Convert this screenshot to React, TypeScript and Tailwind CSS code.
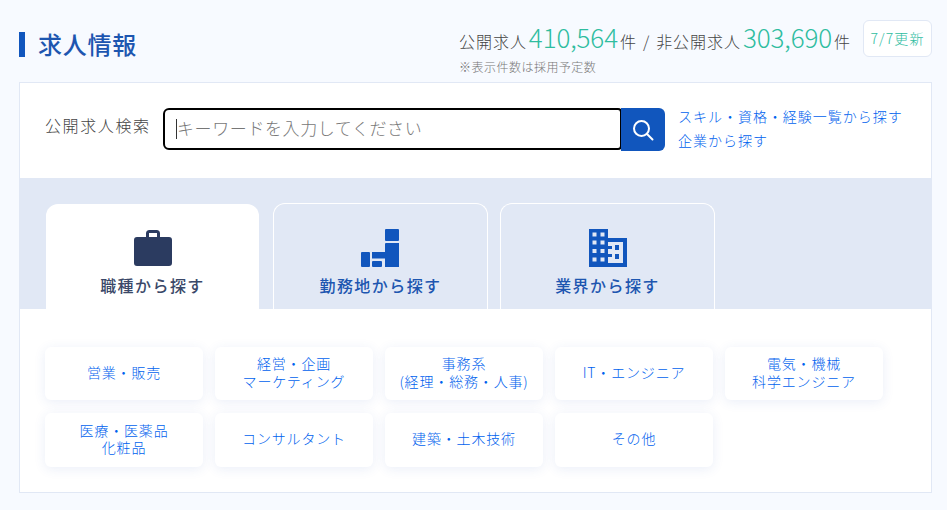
const font = "font-['Noto_Sans_CJK_JP','Noto_Sans',sans-serif]";

const cats: string[][] = [
  ["営業・販売"],
  ["経営・企画", "マーケティング"],
  ["事務系", "(経理・総務・人事)"],
  ["IT・エンジニア"],
  ["電気・機械", "科学エンジニア"],
  ["医療・医薬品", "化粧品"],
  ["コンサルタント"],
  ["建築・土木技術"],
  ["その他"],
];

function Bag() {
  return (
    <svg width="38" height="36" viewBox="0 0 38 36" className="block">
      <path
        fillRule="evenodd"
        fill="#2b3b60"
        d="M12 7V3.5A3.5 3.5 0 0 1 15.5 0h7A3.5 3.5 0 0 1 26 3.5V7h9a3 3 0 0 1 3 3v23a3 3 0 0 1-3 3H3a3 3 0 0 1-3-3V10a3 3 0 0 1 3-3zM15 3v4h8V3z"
      />
    </svg>
  );
}

function Blocks() {
  return (
    <svg width="38" height="38" viewBox="0 0 38 38" className="-ml-[2px] block" fill="#1156bd">
      <rect x="24" y="0" width="14" height="12" rx="1" />
      <path d="M25 14h13v24H24V29.5H11V23h13v-8a1 1 0 0 1 1-1z" />
      <rect x="0" y="23" width="9" height="15" rx="1" />
      <rect x="11" y="32" width="10" height="6" rx="1" />
    </svg>
  );
}

function Building() {
  const rows = [3.5, 11.5, 20, 28.5];
  return (
    <svg width="38" height="38" viewBox="0 0 38 38" className="block">
      <path fill="#1156bd" d="M0 0h19v9h19v29H0z" />
      <path fill="#e1e8f5" d="M19 13h15v21H19z" />
      <g fill="#e1e8f5">
        {rows.map((y) =>
          [3.5, 11.5].map((x) => <rect key={`${x}-${y}`} x={x} y={y} width="4" height="4" />),
        )}
      </g>
      <g fill="#1156bd">
        <rect x="19" y="17" width="4" height="3" />
        <rect x="19" y="25" width="4" height="3" />
        <rect x="26" y="16" width="4" height="5" />
        <rect x="26" y="25" width="4" height="5" />
      </g>
    </svg>
  );
}

export default function App() {
  return (
    <div className={`${font} min-h-[510px] w-[947px] overflow-hidden bg-[#f7faff] pt-5 pl-[19px] font-light`}>
      <div className="flex h-[62px] w-[913px] items-start justify-between">
        <h2 className="mt-[12px] flex h-[25px] items-center border-l-[6px] border-[#1156bd] pl-[13px] text-[24px] leading-none font-medium tracking-[0.03em] text-[#1d56b0]">
          <span className="-mt-[1px]">求人情報</span>
        </h2>
        <div className="flex items-start gap-3">
          <div>
            <p className="flex h-[36px] items-baseline pt-[4px] text-[16px] leading-none tracking-[0.06em] whitespace-nowrap text-[#444]">
              公開求人
              <span className="mx-[2px] text-[26px] leading-none tracking-[-0.005em] text-[#2fbd9f]">410,564</span>件
              <span className="mx-[6px]">/</span>非公開求人
              <span className="mx-[2px] text-[26px] leading-none tracking-[-0.005em] text-[#2fbd9f]">303,690</span>件
            </p>
            <p className="mt-[2px] text-[12px] leading-[18px] tracking-[0.04em] text-[#777]">※表示件数は採用予定数</p>
          </div>
          <div className="flex h-[37px] w-[69px] items-center justify-center rounded-md border border-[#e1e8f5] bg-white text-[14px] tracking-[0.08em] text-[#2fbd9f]">
            7/7更新
          </div>
        </div>
      </div>

      <div className="w-[913px] border border-[#e1e8f5] bg-white">
        <div className="flex h-[95px] items-start pt-[25px] pl-[25px]">
          <span className="mt-[6px] w-[118px] text-[16px] leading-[22px] tracking-[0.1em] whitespace-nowrap text-[#444]">公開求人検索</span>
          <div className="flex h-[42px] w-[459px] items-center rounded-l-md rounded-r-sm border-2 border-black bg-white pl-[11px]">
            <span className="h-[20px] w-px bg-[#333]" />
            <span className="-mt-[2px] text-[17px] tracking-[0.035em] whitespace-nowrap text-[#777]">キーワードを入力してください</span>
          </div>
          <button className="-ml-px flex h-[43px] w-[44px] items-center justify-center rounded-r-md bg-[#1156bd]">
            <svg width="22" height="22" viewBox="0 0 22 22" fill="none" stroke="#fff" strokeWidth="2">
              <circle cx="9.5" cy="9.5" r="7.5" />
              <path d="M15 15l5.5 5.5" strokeLinecap="round" />
            </svg>
          </button>
          <div className="-mt-[2px] ml-[13px] flex flex-col gap-[2px] text-[14px] leading-[22px] tracking-[0.07em] whitespace-nowrap text-[#0062ee]">
            <span className="-mt-[1px]">スキル・資格・経験一覧から探す</span>
            <span>企業から探す</span>
          </div>
        </div>

        <div className="flex h-[131px] items-end bg-[#e1e8f5] pl-[26px]">
          <div className="flex h-[105px] w-[213px] flex-col items-center rounded-t-xl bg-white pt-[26px]">
            <Bag />
            <span className="mt-[7px] text-[16px] leading-[24px] font-medium tracking-[0.09em] text-[#3a4868]">職種から探す</span>
          </div>
          <div className="ml-[14px] flex h-[106px] w-[215px] flex-col items-center rounded-t-xl border border-b-0 border-white pt-[25px]">
            <Blocks />
            <span className="mt-[6px] text-[16px] leading-[24px] font-medium tracking-[0.09em] text-[#1d56b0]">勤務地から探す</span>
          </div>
          <div className="ml-[12px] flex h-[106px] w-[215px] flex-col items-center rounded-t-xl border border-b-0 border-white pt-[25px]">
            <Building />
            <span className="mt-[6px] text-[16px] leading-[24px] font-medium tracking-[0.09em] text-[#1d56b0]">業界から探す</span>
          </div>
        </div>

        <div className="grid grid-cols-[repeat(5,158px)] gap-x-[12px] gap-y-[13px] px-[25px] pt-[38px] pb-[25px]">
          {cats.map((lines, i) => (
            <div
              key={i}
              className={`flex ${i < 5 ? "h-[53px]" : "h-[54px]"} items-center justify-center rounded-md bg-white pb-[2px] text-center text-[14px] leading-[17.5px] tracking-[0.06em] text-[#0062ee] shadow-[0_2px_12px_rgba(50,90,190,0.1)]`}
            >
              <div>
                {lines.map((l, j) => (
                  <span key={l}>
                    {j > 0 && <br />}
                    {l}
                  </span>
                ))}
              </div>
            </div>
          ))}
        </div>
      </div>
    </div>
  );
}
